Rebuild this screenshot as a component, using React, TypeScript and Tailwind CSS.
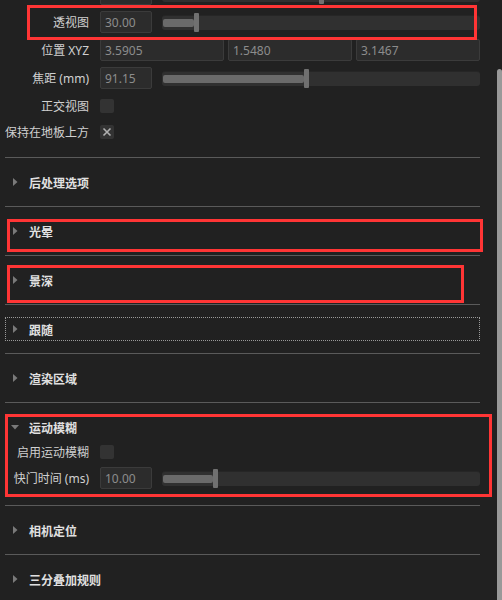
import React from "react";

const font = { fontFamily: '"Noto Sans", "Noto Sans CJK SC", sans-serif' };

const NumInput: React.FC<{ value: string; wide?: boolean }> = ({ value, wide }) => (
  <div className={`h-[22px] ${wide ? "flex-1" : "w-[52px]"} shrink-0 rounded-[2px] border border-[#3b3b3b] bg-[#2c2c2c] pl-[4px] pt-[1px] flex items-center text-[12px] leading-none text-[#8c8c8c]`}>
    {value}
  </div>
);

const Slider: React.FC<{ offset: number }> = ({ offset }) => (
  <div className="ml-[10px] flex-1 h-[22px] flex items-center">
    <div className="relative w-full h-[15px] rounded-[3px] bg-[#303030] border-t border-[#262626]">
      <div className="absolute left-[1px] top-[3px] h-[8px] rounded-[2px] bg-[#6a6a6a]" style={{ width: offset - 1 }} />
      <div className="absolute top-[-3px] h-[19px] w-[5px] rounded-[1px] bg-[#707070]" style={{ left: offset }} />
    </div>
  </div>
);

const Label: React.FC<{ text?: string }> = ({ text }) => (
  <div className="w-[84px] shrink-0 pt-[1px] text-right text-[12px] leading-none text-[#d0d0d0] whitespace-nowrap">{text}</div>
);

const Checkbox: React.FC<{ checked?: boolean }> = ({ checked }) => (
  <div className="w-[14px] h-[14px] rounded-[2px] bg-[#333333] flex items-center justify-center">
    {checked && (
      <svg width="10" height="10" viewBox="0 0 10 10">
        <path d="M1.5 1.5 L8.5 8.5 M8.5 1.5 L1.5 8.5" stroke="#b0b0b0" strokeWidth="1.6" />
      </svg>
    )}
  </div>
);

const Separator = () => <div className="h-px bg-[#5a5a5a]" />;

const Triangle: React.FC<{ open?: boolean; inBox?: boolean }> = ({ open, inBox }) =>
  open ? (
    <svg width="8" height="5" viewBox="0 0 8 5" className="ml-[6px] mr-[10px]">
      <path d="M0 0 L8 0 L4 4.5 Z" fill="#7a7a7a" />
    </svg>
  ) : (
    <svg width="5" height="8" viewBox="0 0 5 8" className={inBox ? "ml-[7px] mr-[11px]" : "ml-[8px] mr-[11px]"}>
      <path d="M0 0 L4.5 4 L0 8 Z" fill="#7a7a7a" />
    </svg>
  );

const Header: React.FC<{ title: string; open?: boolean; inBox?: boolean }> = ({ title, open, inBox }) => (
  <div className="flex items-center text-[12px] leading-none font-bold text-[#e0e0e0]">
    <Triangle open={open} inBox={inBox} />
    <span className="pt-[3px]">{title}</span>
  </div>
);

const Section: React.FC<{ title: string; focused?: boolean }> = ({ title, focused }) => (
  <>
    <Separator />
    <div className="h-[48px] flex items-center">
      {focused ? (
        <div className="w-full h-[24px] flex items-center border border-dotted border-[#9a9a9a]">
          <Header title={title} inBox />
        </div>
      ) : (
        <Header title={title} />
      )}
    </div>
  </>
);

const RedBox: React.FC<{ className: string }> = ({ className }) => (
  <div className={`absolute border-[3px] border-[#ff3535] pointer-events-none ${className}`} />
);

export default function App() {
  return (
    <div className="w-[502px] h-[600px] overflow-hidden bg-[#212121] flex" style={font}>
      <div className="relative w-[497px] pl-[5px] pr-[17px] flex flex-col *:shrink-0">
        {/* camera props (first row scrolled out of view) */}
        <div className="-mt-[17px] h-[22px] flex items-center gap-[11px]">
          <Label />
          <div className="flex flex-1 items-center">
            <NumInput value="" />
            <Slider offset={157} />
          </div>
        </div>
        <div className="mt-[6px] h-[22px] flex items-center gap-[11px]">
          <Label text="透视图" />
          <div className="flex flex-1 items-center">
            <NumInput value="30.00" />
            <Slider offset={32} />
          </div>
        </div>
        <div className="mt-[6px] h-[22px] flex items-center gap-[11px]">
          <Label text="位置 XYZ" />
          <div className="flex flex-1 items-center gap-[4px]">
            <NumInput value="3.5905" wide />
            <NumInput value="1.5480" wide />
            <NumInput value="3.1467" wide />
          </div>
        </div>
        <div className="mt-[6px] h-[22px] flex items-center gap-[11px]">
          <Label text="焦距 (mm)" />
          <div className="flex flex-1 items-center">
            <NumInput value="91.15" />
            <Slider offset={142} />
          </div>
        </div>
        <div className="mt-[10px] h-[14px] flex items-center gap-[11px]">
          <Label text="正交视图" />
          <Checkbox />
        </div>
        <div className="mt-[12px] h-[14px] flex items-center gap-[11px]">
          <Label text="保持在地板上方" />
          <Checkbox checked />
        </div>

        <div className="h-[18px]" />
        <Section title="后处理选项" />
        <Section title="光晕" />
        <Section title="景深" />
        <Section title="跟随" focused />
        <Section title="渲染区域" />

        {/* motion blur, expanded */}
        <Separator />
        <div className="pt-[12px] h-[36px] flex items-center">
          <Header title="运动模糊" open />
        </div>
        <div className="mt-[6px] h-[14px] flex items-center gap-[11px]">
          <Label text="启用运动模糊" />
          <Checkbox />
        </div>
        <div className="mt-[8px] h-[22px] flex items-center gap-[11px]">
          <Label text="快门时间 (ms)" />
          <div className="flex flex-1 items-center">
            <NumInput value="10.00" />
            <Slider offset={51} />
          </div>
        </div>
        <div className="h-[16px]" />

        <Section title="相机定位" />
        <Section title="三分叠加规则" />

        {/* annotation boxes */}
        <RedBox className="left-[27px] top-[5px] w-[450px] h-[35px]" />
        <RedBox className="left-[7px] top-[219px] w-[476px] h-[33px]" />
        <RedBox className="left-[7px] top-[265px] w-[457px] h-[38px]" />
        <RedBox className="left-[5px] top-[414px] w-[487px] h-[83px]" />
      </div>
      <div className="w-[5px] pt-[69px] flex flex-col">
        <div className="flex-1 rounded-t-[3px] bg-[#999999]" />
      </div>
    </div>
  );
}
